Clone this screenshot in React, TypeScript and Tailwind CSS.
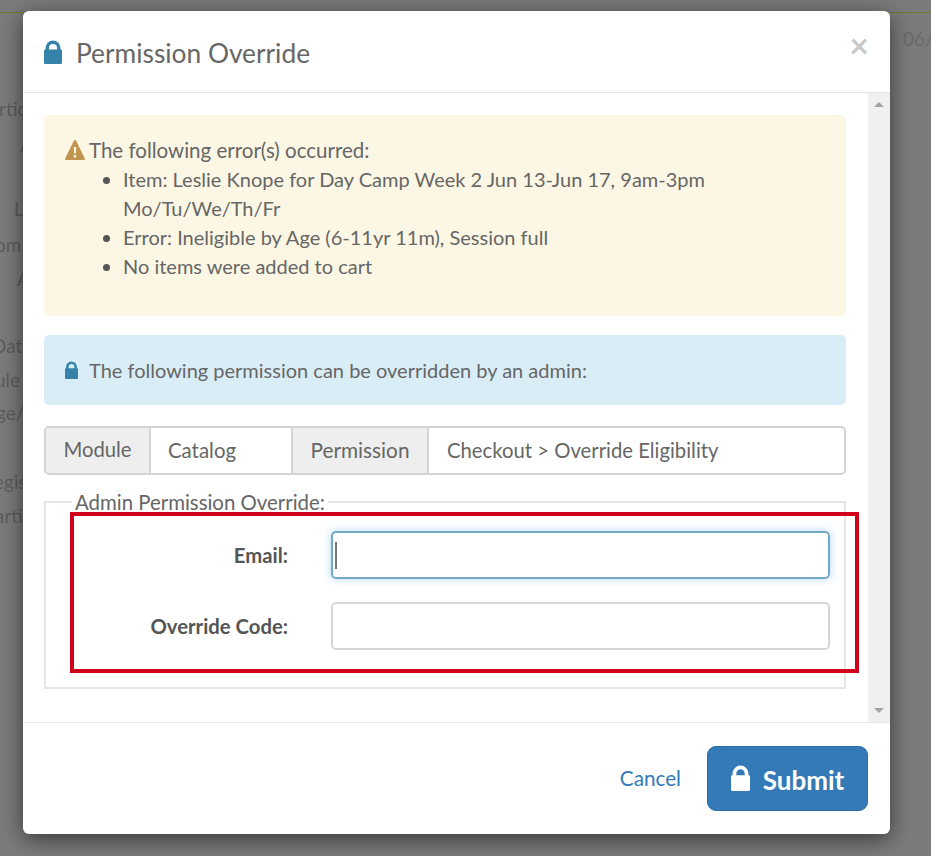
const font = { fontFamily: 'Lato, "Open Sans", sans-serif' }

function Lock({ className }: { className: string }) {
  return (
    <svg viewBox="0 0 18 24" className={className} fill="currentColor" preserveAspectRatio="none">
      <path fillRule="evenodd" d="M1.500 9.500V8a7.500 7.500 0 0 1 15 0v1.500h.2A1.300 1.300 0 0 1 18 10.800v11.900a1.300 1.300 0 0 1-1.300 1.300H1.300A1.300 1.300 0 0 1 0 22.700V10.800a1.300 1.300 0 0 1 1.300-1.300h.2zm3.500 0h8V8a4 4 0 0 0-8 0v1.500z" />
    </svg>
  )
}

function Warning() {
  return (
    <svg viewBox="0 0 20 20" className="w-5 h-5 mr-1 -mt-[2px] text-[#c2964f] shrink-0" fill="currentColor">
      <path fillRule="evenodd" d="M10 0c.5 0 .9.300 1.200.800l8.500 17.400c.5.900 0 1.800-1 1.800H1.300c-1 0-1.500-.900-1-1.800L8.800.800C9.100.300 9.500 0 10 0zM8.800 7l.3 6.500h1.800l.3-6.500H8.800zm0 8v2.500h2.400V15H8.800z" />
    </svg>
  )
}

export default function App() {
  return (
    <div className="w-[931px] h-[856px] overflow-hidden bg-[#7b7b7b] flex text-[#666] text-[20px]" style={font}>
      {/* page behind the dialog */}
      <div className="w-[23px] shrink-0 overflow-hidden text-[#5c5c5c] text-[19px] leading-[24px] blur-[0.6px]">
        <div className="h-[13px] w-full border-b border-[#77772f]" />
        <div className="pt-[84px] -ml-[1px] whitespace-nowrap">rtic</div>
        <div className="mt-[12px] ml-[20px]">A</div>
        <div className="mt-[40px] ml-[14px]">L</div>
        <div className="mt-[12px] -ml-[5px] whitespace-nowrap">om/</div>
        <div className="mt-[10px] ml-[17px]">A</div>
        <div className="mt-[43px] -ml-[8px] whitespace-nowrap">Date</div>
        <div className="mt-[10px] -ml-[5px] whitespace-nowrap">ule</div>
        <div className="mt-[9px] -ml-[4px] whitespace-nowrap">ge/</div>
        <div className="mt-[45px] -ml-[6px] whitespace-nowrap">egis</div>
        <div className="mt-[10px] -ml-[5px] whitespace-nowrap">arti</div>
      </div>

      {/* dialog */}
      <div className="relative z-10 mt-[11px] w-[867px] h-[823px] shrink-0 bg-white rounded-[6px] shadow-[0_5px_22px_rgba(0,0,0,0.55)] flex flex-col overflow-hidden">
        <div className="h-[82px] shrink-0 border-b border-[#e5e5e5] flex items-center pl-[21px] pr-[21px]">
          <Lock className="w-[18px] h-[24px] text-[#3583ab] mr-[14px]" />
          <h4 className="text-[26.300px] text-[#666] leading-none grow mt-[4px]">Permission Override</h4>
          <span className="text-[#c9c9c9] text-[34px] font-bold leading-none -mt-[14px]">×</span>
        </div>

        <div className="h-[630px] shrink-0 flex border-b border-[#e5e5e5]">
          <div className="grow pt-[22px] pl-[21px] pr-[22px] min-w-0">
            <div className="h-[201px] bg-[#fcf7e4] rounded-[5px] pt-[21px] pl-[21px] pr-[20px] leading-[29px]">
              <div className="flex items-center text-[20.500px]">
                <Warning />
                The following error(s) occurred:
              </div>
              <ul className="list-disc pl-[58px] marker:text-[#555]">
                <li>Item: Leslie Knope for Day Camp Week 2 Jun 13-Jun 17, 9am-3pm Mo/Tu/We/Th/Fr</li>
                <li>Error: Ineligible by Age (6-11yr 11m), Session full</li>
                <li>No items were added to cart</li>
              </ul>
            </div>

            <div className="h-[70px] mt-[19px] bg-[#d9edf7] rounded-[5px] pl-[21px] flex items-center">
              <Lock className="w-[13px] h-[18px] text-[#3583ab] mr-[11px]" />
              The following permission can be overridden by an admin:
            </div>

            <div className="h-[49px] mt-[21px] flex border-2 border-[#d4d4d4] rounded-[5px] overflow-hidden pb-[1px]">
              <div className="w-[105px] bg-[#eeeeee] border-r-2 border-[#d4d4d4] flex items-center justify-center text-[20.300px] -mb-[1px] pb-[2px]">Module</div>
              <div className="w-[140px] flex items-center pl-[17px] text-[20.400px]">Catalog</div>
              <div className="w-[138px] bg-[#eeeeee] border-x-2 border-[#d4d4d4] flex items-center justify-center text-[20.800px] -mb-[1px] pb-[2px]">Permission</div>
              <div className="grow flex items-center pl-[18px] text-[20.300px]">Checkout &gt; Override Eligibility</div>
            </div>

            <fieldset className="relative mt-[15px] h-[199px] border-2 border-[#e6e6e6] pl-[20px]">
              <legend className="ml-[6px] px-[3px] leading-[24px] text-[20.400px]">Admin Permission Override:</legend>
              <div className="mt-[17px] flex flex-col gap-[23px] pr-[14px]">
                <div className="flex items-center">
                  <label className="w-[222px] text-right font-bold text-[#555] text-[20.300px]">Email:</label>
                  <div className="ml-[43px] grow h-[48px] rounded-[5px] border-2 border-[#74a8c7] shadow-[0_0_8px_rgba(102,175,233,0.5)] flex items-center pl-[2px]">
                    <div className="w-[2px] h-[27px] bg-[#777]" />
                  </div>
                </div>
                <div className="flex items-center">
                  <label className="w-[222px] text-right font-bold text-[#555] text-[20.300px]">Override Code:</label>
                  <input className="ml-[43px] grow h-[48px] rounded-[5px] border-2 border-[#d6d6d6] outline-none" />
                </div>
              </div>
              {/* annotation box drawn on the screenshot */}
              <div className="absolute left-[24px] -top-[2px] w-[789px] h-[161px] border-[4px] border-[#d0021b]" />
            </fieldset>
          </div>

          <div className="w-[22px] shrink-0 bg-[#f0f0f0] flex flex-col items-center justify-between py-[9px]">
            <div className="w-0 h-0 border-x-[5px] border-x-transparent border-b-[5px] border-b-[#a3a3a3]" />
            <div className="w-0 h-0 border-x-[5px] border-x-transparent border-t-[5px] border-t-[#a3a3a3]" />
          </div>
        </div>

        <div className="grow flex items-center justify-end pr-[22px]">
          <a className="text-[#337ab7] mr-[26px] text-[20.700px]">Cancel</a>
          <button className="w-[161px] h-[65px] bg-[#337ab7] border border-[#2e6da4] rounded-[9px] text-white text-[26px] font-bold flex items-center justify-center gap-[13px]">
            <Lock className="w-[19px] h-[26px] text-white -mt-[1px]" />
            <span className="mt-[3px]">Submit</span>
          </button>
        </div>
      </div>

      <div className="grow min-w-0 overflow-hidden text-[#6a6a6a] text-[19px] whitespace-nowrap">
        <div className="h-[13px] border-b border-[#77772f]" />
        <div className="pt-[12px] pl-[13px]">06/</div>
      </div>
    </div>
  )
}
